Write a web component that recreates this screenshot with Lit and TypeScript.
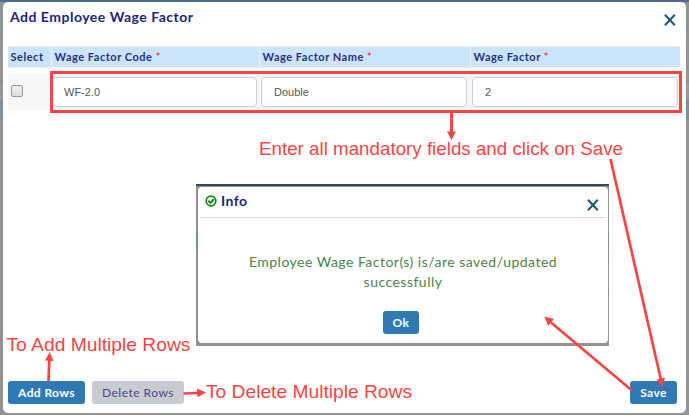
import { LitElement, html, css } from "lit";
import { customElement } from "lit/decorators.js";

const cross = html`<svg class="cross" viewBox="0 0 12 12" width="12" height="12">
  <path d="M1 .8 L10.8 11.2 M10.8 .8 L1 11.2" stroke="#2c5b76" stroke-width="2.3" fill="none" />
</svg>`;

@customElement("info-dialog")
class InfoDialog extends LitElement {
  static styles = css`
    :host {
      box-sizing: border-box;
      display: block;
      width: 413px;
      height: 162px;
      padding: 3px 1px 3px 2px;
      background:
        linear-gradient(#33475a 0 2px, transparent 2px),
        linear-gradient(#939393 0 48px, #7890a2 48px 67px, #939393 67px 76px, #808080 76px 77px, #939393 77px 105px, #808080 105px 106px, #939393 106px);
      font-family: Lato, sans-serif;
    }
    .panel {
      box-sizing: border-box;
      height: 156px;
      background: #fff;
      border-radius: 4px;
      padding: 0 2px;
      display: flex;
      flex-direction: column;
      align-items: center;
    }
    header {
      box-sizing: border-box;
      width: 100%;
      height: 31px;
      border-bottom: 1px solid #dcdcdc;
      display: flex;
      align-items: center;
      padding: 0 7px 2px 5px;
    }
    .tick { margin-right: 4px; }
    h2 {
      margin: 0 0 1px;
      flex: 1;
      font-size: 14px;
      line-height: 18px;
      font-weight: 700;
      letter-spacing: 0.45px;
      color: #23237b;
    }
    .cross { display: block; margin-top: 8px; }
    p {
      margin: 34px 0 19px;
      font-size: 14px;
      line-height: 20px;
      letter-spacing: 0.48px;
      text-align: center;
      color: #4a8547;
    }
    button {
      width: 36px;
      height: 23px;
      margin-right: 4px;
      padding: 0;
      border: 0;
      border-radius: 3px;
      background: #2f7ab5;
      color: #fff;
      font: 700 12px/23px Lato, sans-serif;
      letter-spacing: 0.4px;
    }
  `;
  render() {
    return html`<div class="panel">
      <header>
        <svg class="tick" viewBox="0 0 12 12" width="12" height="12">
          <circle cx="6" cy="6" r="4.8" fill="none" stroke="#078a0b" stroke-width="1.7" />
          <path d="M3.3 5.8 L5.4 7.8 L9 4.2" fill="none" stroke="#078a0b" stroke-width="1.9" />
        </svg>
        <h2>Info</h2>
        ${cross}
      </header>
      <p>Employee Wage Factor(s) is/are saved/updated<br />successfully</p>
      <button>Ok</button>
    </div>`;
  }
}

@customElement("app-root")
class AppRoot extends LitElement {
  static styles = css`
    :host {
      box-sizing: border-box;
      display: block;
      position: relative;
      width: 689px;
      height: 415px;
      padding: 2px 3px 2px 3px;
      overflow: hidden;
      background:
        linear-gradient(#4b6d88 0 2px, transparent 2px),
        linear-gradient(#8d9496 0 35px, #979594 35px 81px, #858585 81px 82px, #989796 82px 100px, #7d8f9d 100px 119px, #939393 119px);
      font-family: Lato, sans-serif;
    }
    .modal {
      box-sizing: border-box;
      height: 411px;
      background: #fff;
      border-radius: 5px;
      padding: 0 6px 9px 5px;
      display: flex;
      flex-direction: column;
    }
    .head {
      display: flex;
      justify-content: space-between;
      align-items: center;
      height: 44px;
      padding: 0 4px 0 2px;
    }
    h1 {
      margin: 0 0 15px;
      font-size: 14px;
      line-height: 20px;
      font-weight: 700;
      letter-spacing: 0.5px;
      color: #23237b;
    }
    .cross { display: block; margin-bottom: 8px; }
    .row {
      display: grid;
      grid-template-columns: 43px 207px 210px 209px;
      column-gap: 1px;
    }
    .labels {
      height: 20px;
      border: solid #f1f1f1;
      border-width: 1px 0;
      background: #f1f1f1;
      margin-bottom: 6px;
    }
    .labels span {
      background: #cae5f9;
      padding-left: 2.5px;
      font-size: 11px;
      line-height: 19px;
      font-weight: 700;
      letter-spacing: 0.52px;
      color: #2b2e82;
      white-space: pre;
    }
    .labels i { font-style: normal; color: #fb3d3d; }
    .fields {
      height: 36px;
      background: #f7f7f7;
      align-items: center;
    }
    .box {
      width: 12px;
      height: 12px;
      box-sizing: border-box;
      border: 1px solid #999;
      border-radius: 2px;
      background: linear-gradient(#f0f0f0, #dcdcdc);
      margin: 0 0 2px 3px;
    }
    .field {
      box-sizing: border-box;
      height: 30px;
      border: 1px solid #ccd;
      border-radius: 4px;
      background: #fff;
      padding-left: 12px;
      font: 11px/29px "Liberation Sans", Arial, sans-serif;
      color: #555;
    }
    .code { width: 205px; padding-left: 11px; }
    .name { width: 206px; margin-left: 1px; }
    .factor { width: 206px; margin-left: 1px; }
    .actions {
      margin-top: auto;
      display: flex;
      gap: 7px;
      padding-right: 3px;
    }
    button {
      height: 23px;
      padding: 0;
      border: 0;
      border-radius: 3px;
      background: #2f7ab5;
      color: #fff;
      font: 700 12px/23px Lato, sans-serif;
      letter-spacing: 0.4px;
    }
    .add { width: 77px; }
    .delete { width: 92px; background: #c8ccd1; color: #4a468e; font-weight: 400; letter-spacing: 0.5px; }
    .save { width: 47px; margin-left: auto; }
    info-dialog { position: absolute; left: 196px; top: 184px; }
    .notes { position: absolute; left: 0; top: 0; font-family: "Liberation Sans", Arial, sans-serif; font-size: 19px; }
  `;
  render() {
    return html`
      <div class="modal">
        <div class="head"><h1>Add Employee Wage Factor</h1>${cross}</div>
        <div class="row labels">
          <span>Select</span>
          <span>Wage Factor Code <i>*</i></span>
          <span>Wage Factor Name <i>*</i></span>
          <span>Wage Factor <i>*</i></span>
        </div>
        <div class="row fields">
          <div class="box"></div>
          <div class="field code">WF-2.0</div>
          <div class="field name">Double</div>
          <div class="field factor">2</div>
        </div>
        <div class="actions">
          <button class="add">Add Rows</button>
          <button class="delete">Delete Rows</button>
          <button class="save">Save</button>
        </div>
      </div>
      <info-dialog></info-dialog>
      <svg class="notes" width="689" height="415" viewBox="0 0 689 415" fill="#fc4444">
        <g stroke="#fc4444" stroke-width="3" fill="none">
          <rect x="51.5" y="72.5" width="629" height="39" />
          <path d="M451.5 112 V133" />
          <path d="M610.5 159 L661 380 M632 390.5 L551 322.5 M48.5 381 L49.3 360 M183.5 393.5 L198 393" stroke-width="2.7" />
        </g>
        <path d="M447 131.5 H456 L451.5 140 Z M656.5 379.5 L665 377.8 L662.8 387.5 Z M544.5 316.5 L554 319 L548 326 Z M45 360.5 L53.5 361 L49.7 352 Z M197 388.5 L206 392.6 L197.4 397.3 Z" />
        <text x="259" y="155" textLength="364" lengthAdjust="spacingAndGlyphs">Enter all mandatory fields and click on Save</text>
        <text x="6.5" y="351" textLength="184" lengthAdjust="spacingAndGlyphs">To Add Multiple Rows</text>
        <text x="206" y="398" textLength="206" lengthAdjust="spacingAndGlyphs">To Delete Multiple Rows</text>
      </svg>
    `;
  }
}
